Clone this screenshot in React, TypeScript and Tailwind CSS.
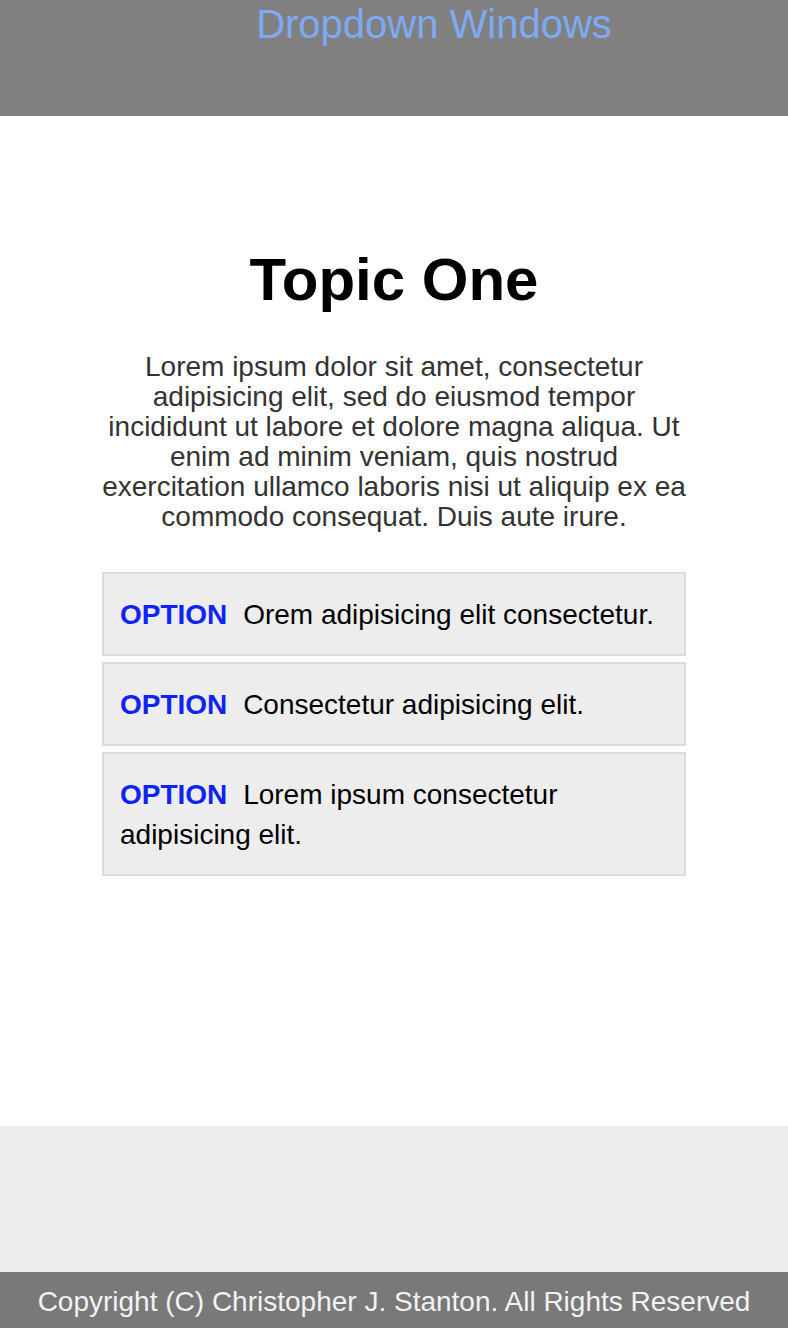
import React from "react";

const options = [
  { id: 1, text: "Orem adipisicing elit consectetur." },
  { id: 2, text: "Consectetur adipisicing elit." },
  { id: 3, text: "Lorem ipsum consectetur adipisicing elit." },
];

const App = () => {
  return (
    <div className="min-h-[1328px] flex flex-col bg-white font-['Liberation_Sans',Arial,sans-serif]">
      {/* cabecera */}
      <header className="h-[116px] bg-[#808080] pl-[80px] text-center">
        <h1 className="text-[40px] leading-[48px] text-[#7eaaf4]">Dropdown Windows</h1>
      </header>

      <main className="flex-1 flex flex-col items-center pt-[128px]">
        <h2 className="text-[60px] leading-[72px] font-bold text-black">Topic One</h2>
        <p className="mt-[36px] w-[584px] text-center text-[28px] leading-[30px] text-[#333]">
          Lorem ipsum dolor sit amet, consectetur adipisicing elit, sed do eiusmod tempor incididunt ut
          labore et dolore magna aliqua. Ut enim ad minim veniam, quis nostrud exercitation ullamco
          laboris nisi ut aliquip ex ea commodo consequat. Duis aute irure.
        </p>

        <ul className="mt-[40px] w-[584px] flex flex-col gap-[6px]">
          {options.map((opt) => (
            <li
              key={opt.id}
              className="border-2 border-[#dcdcdc] bg-[#ededed] px-[16px] pt-[21px] pb-[19px] text-[28px] leading-[40px] text-black"
            >
              <span className="font-bold text-[#0d24f5] mr-[8px]">OPTION</span> {opt.text}
            </li>
          ))}
        </ul>
      </main>

      <div className="h-[146px] bg-[#ededed]" />

      <footer className="h-[56px] bg-[#797979] pt-[3px] text-center text-[28px] leading-[53px] text-[#f2f2f2]">
        Copyright (C) Christopher J. Stanton. All Rights Reserved
      </footer>
    </div>
  );
};

export default App;
